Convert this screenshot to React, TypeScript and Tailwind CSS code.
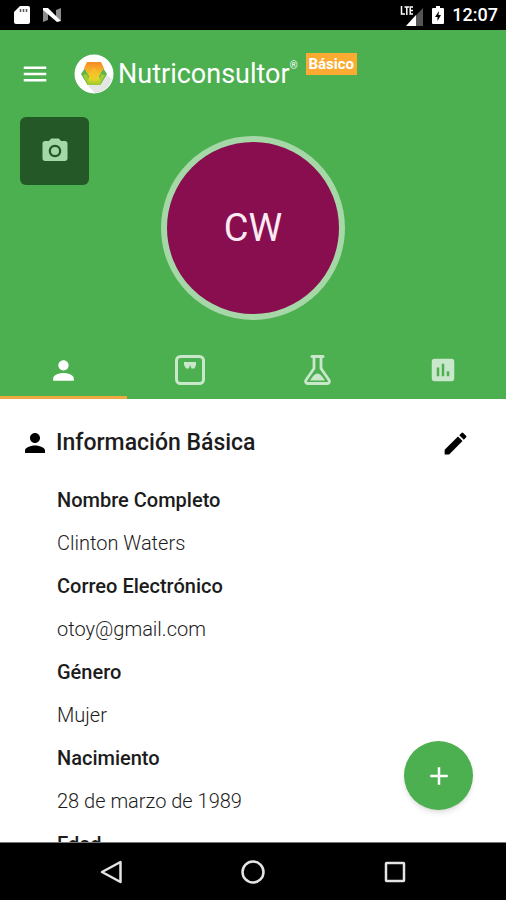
import {
  MdAdd,
  MdAssessment,
  MdCreate,
  MdMenu,
  MdPerson,
  MdPhotoCamera,
} from 'react-icons/md';

const fields = [
  { label: 'Nombre Completo', value: 'Clinton Waters' },
  { label: 'Correo Electrónico', value: 'otoy@gmail.com' },
  { label: 'Género', value: 'Mujer' },
  { label: 'Nacimiento', value: '28 de marzo de 1989' },
  { label: 'Edad', value: '' },
];

function ScaleIcon() {
  return (
    <svg className="h-8 w-8" viewBox="0 0 32 32" fill="none">
      <rect x="2.5" y="2.5" width="27" height="27" rx="4" stroke="currentColor" strokeWidth="3" />
      <path d="M10 8h12v3l-1.500 3.500h-3L16 11l-1 3.500h-3L10 11z" fill="currentColor" />
    </svg>
  );
}

function FlaskIcon() {
  return (
    <svg className="h-8 w-8" viewBox="0 0 32 32" fill="none">
      <path d="M12 2.500h11" stroke="currentColor" strokeWidth="3" strokeLinecap="round" />
      <path
        d="M14 3v11.500L6 26c-1 1.800-.2 3.500 1.800 3.500h19.400c2 0 2.800-1.700 1.800-3.500L21 14.500V3"
        stroke="currentColor"
        strokeWidth="2.800"
        strokeLinejoin="round"
      />
      <path d="M10 26.500l3-4.300c1.500-1.800 3-2.700 4.500-2.700s3 .9 4.500 2.700l3 4.300z" fill="currentColor" />
    </svg>
  );
}

function Logo() {
  return (
    <svg className="h-10 w-10" viewBox="0 0 40 40">
      <defs>
        <linearGradient id="fruit" x1="0" y1="0" x2="0" y2="1">
          <stop offset="0" stopColor="#f58a26" />
          <stop offset="0.4" stopColor="#f5b52a" />
          <stop offset="0.7" stopColor="#dfdc25" />
          <stop offset="1" stopColor="#9cc832" />
        </linearGradient>
      </defs>
      <circle cx="20" cy="20" r="19.500" fill="#fff" />
      <path d="M31 20l7 5a19 19 0 0 1-17 14l-7-7z" fill="#e3e6e4" />
      <path d="M11 14l-4 6 6 10h14l6-10-4-6z" fill="#5fb548" />
      <path d="M9 21l4-1 2 7-2 2zM31 21l-4-1-2 7 2 2z" fill="#a4cb35" />
      <path d="M13 8h14l3 6-5 8 2 9H13l2-9-5-8z" fill="url(#fruit)" />
      <path d="M20 13l5 7-5 9-5-9z" fill="#fbc02d" fillOpacity="0.6" />
    </svg>
  );
}

function StatusBar() {
  return (
    <div className="flex h-[30px] shrink-0 items-center justify-between bg-black pr-2 pl-3.5 text-white">
      <div className="flex items-center gap-3">
        <svg className="h-5 w-4" viewBox="0 0 16 20">
          <path d="M6 1h8a2 2 0 0 1 2 2v14a2 2 0 0 1-2 2H2a2 2 0 0 1-2-2V7z" fill="#fff" />
          <path d="M6.500 4v3M9.500 4v3M12.500 4v3" stroke="#555" strokeWidth="1.500" />
        </svg>
        <svg className="h-4 w-5" viewBox="0 0 20 16">
          <path d="M1 2l5 3v8l-5 2zM19 1v13l-5-3V3z" fill="#8c8c8c" />
          <path d="M1 1h5l13 13-4 1L1 3z" fill="#fff" />
        </svg>
      </div>
      <div className="flex items-center gap-2">
        <svg className="h-6 w-6" viewBox="0 0 24 24">
          <path d="M23 5v18H6z" fill="#555" />
          <path d="M16 12v11H6z" fill="#fff" />
          <path d="M0 2h14v11H0z" fill="#000" />
          <path d="M1.500 3v8H5M4.500 4H9M6.800 4v8M13 4h-2.800v7H13M10.200 7.500H13" stroke="#fff" strokeWidth="1.500" fill="none" />
        </svg>
        <svg className="h-5 w-3" viewBox="0 0 12 20">
          <path d="M4 1h4v2h3a1 1 0 0 1 1 1v14a1 1 0 0 1-1 1H1a1 1 0 0 1-1-1V4a1 1 0 0 1 1-1h3z" fill="#fff" />
          <path d="M7 6l-4 6h2.500v4L9 10H6.500z" fill="#000" />
        </svg>
        <span className="text-lg font-medium">12:07</span>
      </div>
    </div>
  );
}

function ProfileHeader() {
  const tab = 'flex items-center justify-center border-b-[3px] pt-1';
  return (
    <header className="shrink-0 bg-[#4caf50] text-white">
      <div className="flex h-[87px] items-center pl-5">
        <button type="button" aria-label="Menú">
          <MdMenu size={30} />
        </button>
        <div className="ml-6 flex items-center">
          <Logo />
          <div className="flex items-start pl-1">
            <span className="text-[27px] leading-8">Nutriconsultor</span>
            <span className="text-[10px] leading-4">®</span>
          </div>
        </div>
        <span className="mb-5 ml-2 bg-[#fbab32] px-[3px] text-[15px] leading-[22px] font-bold">Básico</span>
      </div>

      <div className="grid h-[223px] grid-cols-[1fr_auto_1fr] items-start">
        <button
          type="button"
          aria-label="Cambiar foto"
          className="ml-5 flex h-[68px] w-[69px] items-center justify-center rounded-md bg-[#245826] text-[#a5d8a7]"
        >
          <MdPhotoCamera size={30} />
        </button>
        <div className="mt-[19px] flex h-[184px] w-[184px] items-center justify-center rounded-full border-[6px] border-[#a5d7a7] bg-[#880e4f] text-[38px] text-[#fbeaf3]">
          CW
        </div>
      </div>

      <div role="tablist" className="grid h-[59px] grid-cols-4">
        <button type="button" role="tab" aria-selected="true" aria-label="Perfil" className={`${tab} border-[#f0a840]`}>
          <MdPerson size={31} />
        </button>
        <button type="button" role="tab" aria-selected="false" aria-label="Medidas" className={`${tab} border-transparent text-[#c9e7ca]`}>
          <ScaleIcon />
        </button>
        <button type="button" role="tab" aria-selected="false" aria-label="Análisis" className={`${tab} border-transparent text-[#c9e7ca]`}>
          <FlaskIcon />
        </button>
        <button type="button" role="tab" aria-selected="false" aria-label="Estadísticas" className={`${tab} border-transparent text-[#c9e7ca]`}>
          <MdAssessment size={30} />
        </button>
      </div>
    </header>
  );
}

function NavigationBar() {
  return (
    <nav className="grid h-[58px] shrink-0 grid-cols-3 border-t border-[#777] bg-black px-10 text-[#e4e4e4]">
      <button type="button" aria-label="Atrás" className="flex items-center justify-center">
        <svg className="h-6 w-6" viewBox="0 0 24 24" fill="none" stroke="currentColor" strokeWidth="2.500" strokeLinejoin="round">
          <path d="M21.500 2v20L3 12z" />
        </svg>
      </button>
      <button type="button" aria-label="Inicio" className="flex items-center justify-center">
        <svg className="h-6 w-6" viewBox="0 0 24 24" fill="none" stroke="currentColor" strokeWidth="2.500">
          <circle cx="12" cy="12" r="10.500" />
        </svg>
      </button>
      <button type="button" aria-label="Recientes" className="flex items-center justify-center">
        <svg className="h-6 w-6" viewBox="0 0 24 24" fill="none" stroke="currentColor" strokeWidth="2.500">
          <rect x="3" y="3" width="18" height="18" rx="0.500" />
        </svg>
      </button>
    </nav>
  );
}

export default function App() {
  return (
    <div className="flex h-screen flex-col overflow-hidden bg-white font-[Roboto,sans-serif] text-[#1c1c1c]">
      <StatusBar />
      <ProfileHeader />

      <main className="relative min-h-0 flex-1">
        <div className="h-full overflow-hidden pt-5 pr-9 pl-5">
          <div className="flex h-12 items-center">
            <MdPerson size={30} className="text-black" />
            <h1 className="ml-1.5 flex-1 text-[23px] font-medium">Información Básica</h1>
            <button type="button" aria-label="Editar" className="text-black">
              <MdCreate size={29} />
            </button>
          </div>
          <dl className="mt-3 pl-[37px] text-[20px] leading-[43px]">
            {fields.map((field) => (
              <div key={field.label}>
                <dt className="font-medium">{field.label}</dt>
                <dd className="font-light">{field.value}</dd>
              </div>
            ))}
          </dl>
        </div>

        {/* Floating action button */}
        <button
          type="button"
          aria-label="Agregar"
          className="absolute right-[33px] bottom-8 flex h-[69px] w-[69px] items-center justify-center rounded-full bg-[#4caf50] text-white shadow-md"
        >
          <MdAdd size={30} />
        </button>
      </main>

      <NavigationBar />
    </div>
  );
}
